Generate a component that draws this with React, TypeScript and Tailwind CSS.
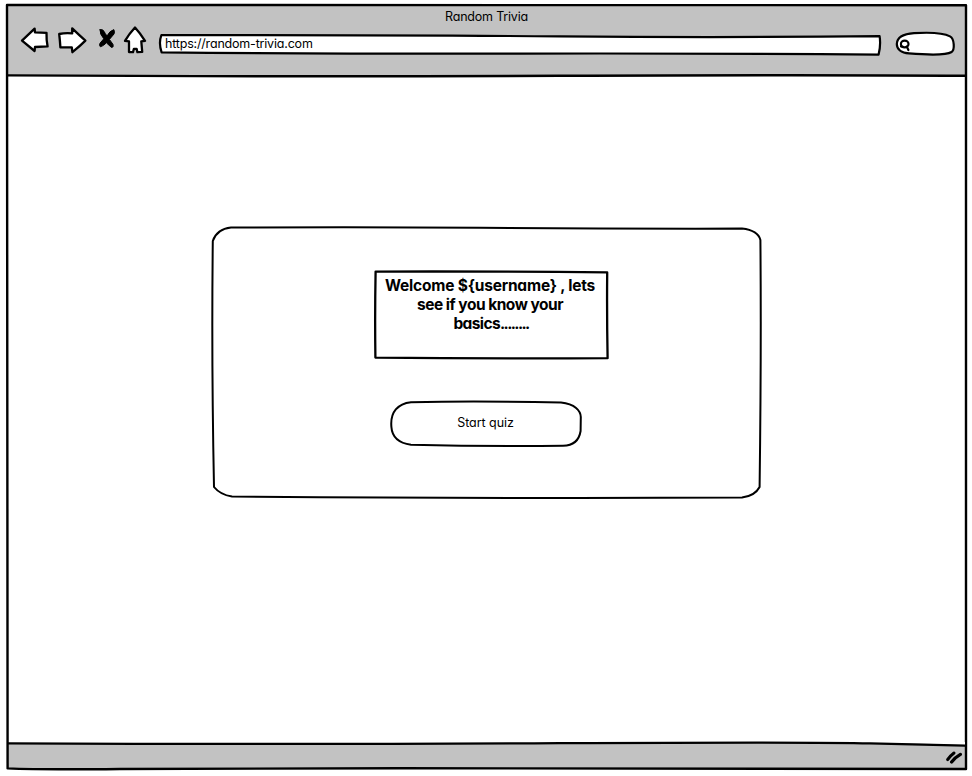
import type { ReactNode } from "react";

type SketchProps = { box: string; className: string; children: ReactNode };

function Sketch({ box, className, children }: SketchProps) {
  return (
    <svg
      viewBox={box}
      className={className}
      fill="none"
      stroke="#000"
      strokeLinecap="round"
      strokeLinejoin="round"
      aria-hidden="true"
    >
      {children}
    </svg>
  );
}

const overlay = "pointer-events-none absolute inset-0 h-full w-full overflow-visible";

function Toolbar() {
  return (
    <div className="flex h-[36px] items-start pl-[13px]">
      <button aria-label="Back" className="h-[28px] w-[30px]">
        <Sketch box="20 26 30 28" className="h-[28px] w-[30px]">
          <path fill="#fff" strokeWidth="2.3" d="M22 40.6 L34.6 28.6 L35 32.4 L46.5 32.8 Q46.3 40 47.6 46.4 L35 47 L34.6 51 Z" />
        </Sketch>
      </button>
      <button aria-label="Forward" className="ml-[7px] h-[28px] w-[31px]">
        <Sketch box="57 26 31 28" className="h-[28px] w-[31px]">
          <path fill="#fff" strokeWidth="2.3" d="M59.2 34 Q65 32.8 72.2 33.4 L72.2 28.4 Q79 35 85.4 40.6 Q80 46 72.4 52.2 L71.8 47.4 L60.4 47.4 Q60 41 59.2 34 Z" />
        </Sketch>
      </button>
      <button aria-label="Stop" className="ml-[10px] h-[28px] w-[18px]">
        <Sketch box="98 26 18 28" className="h-[28px] w-[18px]">
          <path fill="#000" strokeWidth="1" d="M100 29.8 Q103 28.4 105.2 33.4 L107 36 Q109.5 31 113.8 29.6 Q115 31.5 114 34 L109.4 39.4 L113 44.4 Q114 47.6 111.4 47.4 L106.4 42.8 Q103.5 46 100.4 46.8 Q98.8 45.6 100 43.2 L103.8 38.8 Q99.6 34 100 29.8 Z" />
        </Sketch>
      </button>
      <button aria-label="Home" className="ml-[7px] h-[28px] w-[24px]">
        <Sketch box="123 26 24 28" className="h-[28px] w-[24px]">
          <path fill="#fff" strokeWidth="2.3" d="M135 27.5 Q140 33 145 40.8 L141.3 41.4 L142.2 51.8 L137.4 52.2 L136.6 48.8 L133.9 48.8 L133 52.2 L129 52 L129 41.4 L125 40.8 Q129 34 135 27.5 Z" />
        </Sketch>
      </button>
      <div className="relative ml-[12px] mt-[8px] flex h-[21px] w-[722px] items-start pl-[6px]">
        <Sketch box="159 34 722 21" className={overlay}>
          <path fill="#fff" strokeWidth="2.2" d="M161.4 35.2 Q400 35 560 36.4 T879.6 36.2 Q881 45 878.6 54.6 Q700 53.2 520 53.6 T161.6 52.4 Q158.4 43 161.4 35.2 Z" />
        </Sketch>
        <span className="relative text-[12.5px] leading-[20px] tracking-[-0.19px]">https://random-trivia.com</span>
      </div>
      <div className="relative ml-[14px] mt-[5px] h-[25px] w-[61px]">
        <Sketch box="895 31 61 25" className={overlay}>
          <path fill="#fff" strokeWidth="2.2" d="M896.8 44 C897 37 903 34 914 33.2 C930 32.2 944 33.2 950 36.4 C954.6 39 954.8 50 951.6 52 C946 55.4 924 54.6 909 53.4 C901 52.8 896.8 49 896.8 44 Z" />
          <ellipse cx="904.7" cy="44" rx="3.8" ry="3.3" strokeWidth="2.2" />
          <path strokeWidth="2.2" d="M901 46.4 L903 46.8 M906.8 46.6 L908.4 50" />
        </Sketch>
      </div>
    </div>
  );
}

export default function App() {
  return (
    <div className="h-[776px] w-[972px] overflow-hidden bg-white pl-[7px] pt-[5px] font-['Inter','Liberation_Sans',sans-serif] text-black [font-feature-settings:'cv11']">
      <div className="relative flex h-[764px] w-[959px] flex-col">
        <header className="h-[71px] bg-[#c2c2c2]">
          <h1 className="h-[21px] text-center text-[12.5px] leading-[23px] tracking-[-0.2px]">Random Trivia</h1>
          <Toolbar />
        </header>

        <main className="flex flex-1 flex-col items-center bg-white pt-[151px]">
          <section className="relative flex h-[271px] w-[549px] flex-col items-center pt-[44px]">
            <Sketch box="212 227 549 271" className={overlay}>
              <path strokeWidth="2" d="M231 227.6 Q360 226.8 480 227.8 T742 228.6 Q758 230.5 760.4 240 Q761.4 350 759.6 487 Q755 495.8 742 497.6 Q500 498.6 232 496.6 Q220 494.5 214 487 Q211.4 360 212.8 241 Q217 229 231 227.6 Z" />
            </Sketch>
            <div className="relative ml-[10px] h-[88px] w-[234px] pr-[3px] pt-[5px]">
              <Sketch box="375 271 234 88" className={overlay}>
                <path strokeWidth="2.3" d="M375.6 271.6 Q490 271.2 607.2 272.4 Q606.8 315 607.6 358.2 Q490 358.8 375.4 357.6 Q374.8 315 375.6 271.6 Z" />
              </Sketch>
              <p className="relative text-center text-[15.5px] font-bold leading-[19px]">
                <span className="block tracking-[-0.2px]">Welcome ${"{username}"} , lets</span>
                <span className="block tracking-[-0.5px]">see if you know your</span>
                <span className="block pl-[2px]">
                  <span className="tracking-[-0.6px]">basics</span>
                  <span className="tracking-[-1.6px]">........</span>
                </span>
              </p>
            </div>
            <button className="relative -left-px mt-[42px] h-[46px] w-[192px] text-[12.5px]">
              <Sketch box="390 401 192 46" className={overlay}>
                <path strokeWidth="2" d="M411 402.2 Q480 400.8 561 402.6 C575 404 580.6 411 580.8 417 L580.6 431 C579 441 572 445.6 563 445.8 Q490 446.6 411 444.8 C398 443 392 436 391.4 427 C390 412 398 403.5 411 402.2 Z" />
              </Sketch>
              <span className="relative block pb-[2px] tracking-[-0.05px]">Start quiz</span>
            </button>
          </section>
        </main>

        <footer className="relative flex h-[26px] items-center justify-end bg-[#c2c2c2] pr-[3px]">
          <Sketch box="945 750 18 15" className="h-[15px] w-[18px]">
            <path strokeWidth="3" d="M947.6 760.6 Q950 757 954 754" />
            <path strokeWidth="3.2" d="M951.6 763 Q955 758.5 960.4 755.4" />
          </Sketch>
        </footer>

        <Sketch box="7 5 959 764" className={overlay}>
          <path strokeWidth="2.4" d="M7 5 Q300 4.4 966 5.2 Q965.4 300 966 769 Q700 767.8 400 768.2 Q200 768.2 120 769 T7.6 768.4 Q6.4 300 7 5 Z" />
          <path strokeWidth="2.4" d="M8 75.4 Q300 77 560 75.8 T965 75.8" />
          <path fill="#fff" stroke="none" d="M869 742 L965 742 L965 745 Z" />
          <path strokeWidth="2.2" d="M8 743.4 Q300 744.6 560 743.2 T870 743.4 L965 745.6" />
        </Sketch>
      </div>
    </div>
  );
}
